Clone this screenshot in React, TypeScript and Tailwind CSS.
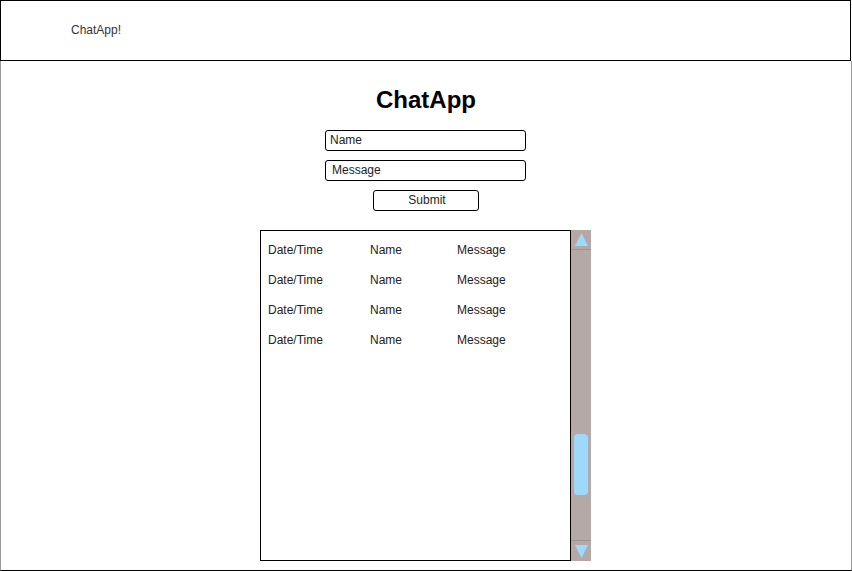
import React from "react";

const rows = [0, 1, 2, 3];

export default function App() {
  return (
    <div
      className="w-[852px] h-[571px] flex flex-col bg-white text-[#222]"
      style={{ fontFamily: '"Liberation Sans", Arial, sans-serif' }}
    >
      <header className="h-[61px] w-[851px] border border-black flex items-center pl-[70px] pb-[2px] shrink-0">
        <span className="text-[12px] text-[#333]">ChatApp!</span>
      </header>
      <main className="flex-1 w-[852px] border-l border-r border-l-[#999] border-r-[#999] border-b border-b-black flex flex-col">
        <h1 className="self-center mt-[26px] h-[26px] leading-[26px] text-[24px] font-bold text-black">ChatApp</h1>
        <div className="ml-[324px] mt-[17px] w-[201px] h-[21px] border border-black rounded-[3px] flex items-center pl-[4px] pb-[1px] text-[12px] text-[#222]">
          Name
        </div>
        <div className="ml-[324px] mt-[9px] w-[201px] h-[21px] border border-black rounded-[3px] flex items-center pl-[6px] pb-[1px] text-[12px] text-[#222]">
          Message
        </div>
        <div className="ml-[372px] mt-[9px] w-[106px] h-[21px] border border-black rounded-[3px] flex items-center justify-center pl-[2px] pb-[1px] text-[12px] text-[#222]">
          Submit
        </div>
        <div className="ml-[259px] mt-[19px] flex h-[331px]">
          <div className="w-[311px] h-[331px] border border-black pt-[4px] pl-[7px]">
            {rows.map((r) => (
              <div key={r} className="h-[30px] flex items-center text-[12px] text-[#222]">
                <span className="w-[102px]">Date/Time</span>
                <span className="w-[87px]">Name</span>
                <span>Message</span>
              </div>
            ))}
          </div>
          <div className="w-[20px] h-[331px] bg-[#b4a9a6] flex flex-col">
            <div className="h-[20px] border-b border-[#9d9390] flex items-center justify-center">
              <svg width="15" height="15" viewBox="0 0 15 15">
                <polygon points="7.5,1 14,14 1,14" fill="#9ed8fb" />
              </svg>
            </div>
            <div className="flex-1 relative">
              <div className="absolute left-[3px] top-[184px] w-[14px] h-[61px] rounded-[4px] bg-[#9ed8fb]" />
            </div>
            <div className="h-[21px] border-t border-[#9d9390] flex items-center justify-center">
              <svg width="15" height="15" viewBox="0 0 15 15">
                <polygon points="1,1 14,1 7.5,14" fill="#9ed8fb" />
              </svg>
            </div>
          </div>
        </div>
      </main>
    </div>
  );
}
